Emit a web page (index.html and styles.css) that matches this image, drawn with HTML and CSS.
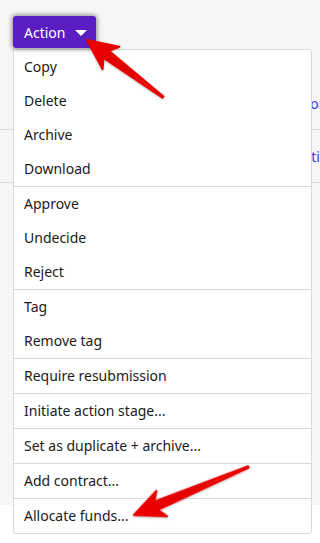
FILE: index.html
```html
<!DOCTYPE html>
<html>
<head>
<meta charset="utf-8">
<link rel="stylesheet" href="styles.css">
</head>
<body>
<div class="page">
  <div class="toolbar">
    <div class="dropdown">
      <button class="action-btn">Action <span class="caret"></span></button>
      <ul class="menu">
        <li class="group">
          <div class="item">Copy</div>
          <div class="item">Delete</div>
          <div class="item">Archive</div>
          <div class="item">Download</div>
        </li>
        <li class="group">
          <div class="item">Approve</div>
          <div class="item">Undecide</div>
          <div class="item">Reject</div>
        </li>
        <li class="group">
          <div class="item">Tag</div>
          <div class="item">Remove tag</div>
        </li>
        <li class="group"><div class="item">Require resubmission</div></li>
        <li class="group"><div class="item">Initiate action stage...</div></li>
        <li class="group"><div class="item">Set as duplicate + archive...</div></li>
        <li class="group"><div class="item">Add contract...</div></li>
        <li class="group"><div class="item">Allocate funds...</div></li>
      </ul>
    </div>
  </div>
  <div class="table">
    <div class="row"><a class="cell-link">Vendor</a></div>
    <div class="row"><a class="cell-link">Donation</a></div>
  </div>
</div>
<svg class="arrows" width="320" height="543" viewBox="0 0 320 543">
  <defs>
    <linearGradient id="red" x1="0" y1="0" x2="1" y2="0">
      <stop offset="0" stop-color="#ee0000"/>
      <stop offset="0.5" stop-color="#e00000"/>
      <stop offset="1" stop-color="#ff1a1a"/>
    </linearGradient>
    <filter id="sh" x="-20%" y="-20%" width="140%" height="140%">
      <feDropShadow dx="0" dy="1" stdDeviation="1" flood-color="#000" flood-opacity="0.25"/>
    </filter>
  </defs>
  <g filter="url(#sh)">
    <polygon transform="translate(87,40) rotate(36.9)" points="0,0 30,-14 24,-4.5 95,-0.8 95,0.8 24,4.5 30,14" fill="url(#red)" stroke="#e80000" stroke-width="2" stroke-linejoin="round"/>
    <polygon transform="translate(134,515) rotate(-22.8)" points="0,0 30,-13.5 24,-4.5 124,-0.8 124,0.8 24,4.5 30,14" fill="url(#red)" stroke="#e80000" stroke-width="2" stroke-linejoin="round"/>
  </g>
</svg>
</body>
</html>
```
FILE: styles.css
```css
html, body {
  margin: 0;
  padding: 0;
}
body {
  background: #ffffff;
  font-family: "Noto Sans", "Open Sans", sans-serif;
  font-size: 14px;
  color: #1a1a1a;
  width: 320px;
  height: 543px;
  overflow: hidden;
  position: relative;
}
.page {
  background: #f6f6f7;
  height: 505px;
}
.toolbar {
  padding: 16px 0 0 13px;
}
.dropdown {
  position: relative;
  display: inline-block;
  z-index: 2;
}
.action-btn {
  display: flex;
  align-items: center;
  gap: 10px;
  height: 32px;
  padding: 0 9px 0 11px;
  border: none;
  border-radius: 3px;
  background: #5b1cc2;
  color: #ffffff;
  font-family: "Noto Sans", "Open Sans", sans-serif;
  font-size: 14px;
  box-shadow: 0 0 5px 1px rgba(0, 0, 0, 0.45);
  position: relative;
  z-index: 3;
}
.caret {
  width: 0;
  height: 0;
  border-left: 6px solid transparent;
  border-right: 6px solid transparent;
  border-top: 6px solid #ffffff;
  margin-top: 2px;
}
.menu {
  position: absolute;
  top: 33px;
  left: 0;
  width: 297px;
  margin: 0;
  padding: 0;
  list-style: none;
  background: #ffffff;
  border: 1px solid #d9d9d9;
  border-radius: 0 3px 3px 3px;
}
.group {
  border-top: 1px solid #d9d9d9;
}
.group:first-child {
  border-top: none;
}
.item {
  height: 34px;
  line-height: 34px;
  padding-left: 10px;
  white-space: nowrap;
}
.table {
  margin-top: 30px;
  width: 320px;
  overflow: hidden;
}
.row {
  height: 51px;
  border-bottom: 1px solid #dcdcdc;
  display: flex;
  align-items: center;
  padding-left: 277px;
  white-space: nowrap;
  overflow: hidden;
}
.row + .row {
  height: 52px;
  padding-left: 276px;
}
.cell-link {
  color: #3b3bd6;
}
.arrows {
  position: absolute;
  left: 0;
  top: 0;
  z-index: 5;
  pointer-events: none;
}
```
